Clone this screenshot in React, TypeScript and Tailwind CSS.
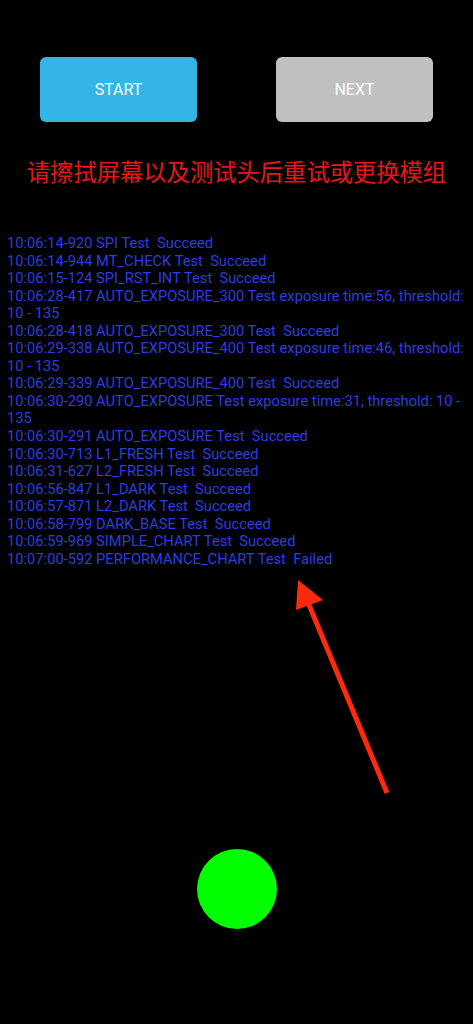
const logs = [
  '10:06:14-920 SPI Test  Succeed',
  '10:06:14-944 MT_CHECK Test  Succeed',
  '10:06:15-124 SPI_RST_INT Test  Succeed',
  '10:06:28-417 AUTO_EXPOSURE_300 Test exposure time:56, threshold: 10 - 135',
  '10:06:28-418 AUTO_EXPOSURE_300 Test  Succeed',
  '10:06:29-338 AUTO_EXPOSURE_400 Test exposure time:46, threshold: 10 - 135',
  '10:06:29-339 AUTO_EXPOSURE_400 Test  Succeed',
  '10:06:30-290 AUTO_EXPOSURE Test exposure time:31, threshold: 10 - 135',
  '10:06:30-291 AUTO_EXPOSURE Test  Succeed',
  '10:06:30-713 L1_FRESH Test  Succeed',
  '10:06:31-627 L2_FRESH Test  Succeed',
  '10:06:56-847 L1_DARK Test  Succeed',
  '10:06:57-871 L2_DARK Test  Succeed',
  '10:06:58-799 DARK_BASE Test  Succeed',
  '10:06:59-969 SIMPLE_CHART Test  Succeed',
  '10:07:00-592 PERFORMANCE_CHART Test  Failed',
]

export default function App() {
  return (
    <div
      className="relative min-h-[1024px] w-full overflow-hidden bg-black"
      style={{ fontFamily: 'Roboto, "Noto Sans CJK SC", sans-serif' }}
    >
      <div className="flex justify-between px-10 pt-[57px]">
        <button
          type="button"
          className="h-[65px] w-[157px] rounded-md bg-[#33b5e5] text-[16px] text-white"
        >
          START
        </button>
        <button
          type="button"
          className="h-[65px] w-[157px] rounded-md bg-[#c0c0c0] text-[16px] text-white"
        >
          NEXT
        </button>
      </div>

      <p className="mt-[35px] text-center text-[23.3px] leading-[32px] text-[#e8161a]">
        请擦拭屏幕以及测试头后重试或更换模组
      </p>

      <div className="mt-[46px] pl-[7px] text-[14.7px] leading-[17.55px] text-[#2b3ee0] whitespace-pre-wrap">
        {logs.map((line) => (
          <div key={line}>{line}</div>
        ))}
      </div>

      <div className="flex justify-center pt-[281px]">
        <div className="h-[80px] w-[80px] rounded-full bg-[#00ff00]" />
      </div>

      {/* arrow pointing at the failed line */}
      <svg className="pointer-events-none absolute left-0 top-0" width="473" height="1024">
        <line x1="387" y1="793" x2="307" y2="600" stroke="#ff2a0e" strokeWidth="5" />
        <polygon points="298,580 296,610 323,600" fill="#ff2a0e" />
      </svg>
    </div>
  )
}
